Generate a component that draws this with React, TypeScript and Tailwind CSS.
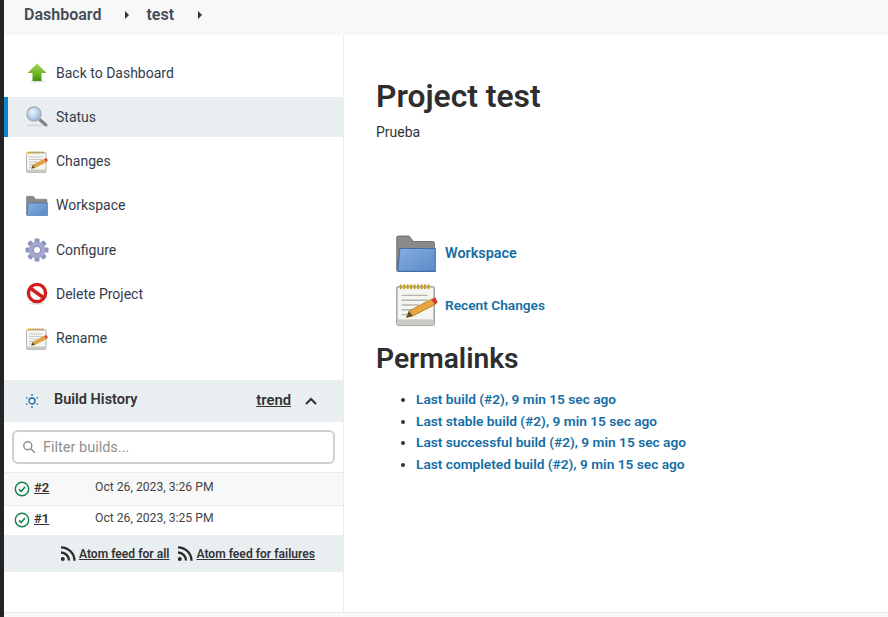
import { useId } from 'react';
import type { ReactNode } from 'react';

const FONT = "font-['Roboto','Noto_Sans',sans-serif]";

function ArrowUpIcon() {
  const id = useId();
  return (
    <svg width="24" height="24" viewBox="0 0 24 24">
      <defs>
        <linearGradient id={id} x1="0" y1="0" x2="0" y2="1">
          <stop offset="0" stopColor="#a4d65a" />
          <stop offset="0.6" stopColor="#6cb324" />
          <stop offset="1" stopColor="#3f8f0d" />
        </linearGradient>
      </defs>
      <ellipse cx="12" cy="20.500" rx="8" ry="1.200" fill="#e2e2e2" />
      <path d="M12 2.500 21.500 12h-5v8H7.500v-8h-5z" fill={`url(#${id})`} />
    </svg>
  );
}

function SearchIcon() {
  const id = useId();
  return (
    <svg width="24" height="24" viewBox="0 0 24 24">
      <defs>
        <radialGradient id={id} cx="0.4" cy="0.35" r="0.7">
          <stop offset="0" stopColor="#eef4fb" />
          <stop offset="1" stopColor="#8fb3dd" />
        </radialGradient>
      </defs>
      <ellipse cx="10" cy="20.500" rx="9" ry="1.300" fill="#d9dcdf" />
      <path d="M14.500 14.500 21 20" stroke="#7f8386" strokeWidth="3" strokeLinecap="round" />
      <circle cx="9" cy="9" r="7" fill={`url(#${id})`} stroke="#a9b2ba" strokeWidth="1.600" />
    </svg>
  );
}

function NotepadIcon({ size = 24 }: { size?: number }) {
  const rings = [3.500, 5.300, 7.100, 8.900, 10.700, 12.500, 14.300, 16.100, 17.900];
  return (
    <svg width={size} height={size} viewBox="0 0 24 24">
      <rect x="1.500" y="2.500" width="19.500" height="20" rx="1" fill="#f5f5f1" stroke="#a5a5a0" strokeWidth="0.800" />
      <rect x="1.500" y="19.500" width="19.500" height="3" fill="#c9c9c5" />
      {rings.map((x) => (
        <rect key={x} x={x - 0.5} y="1.200" width="1.100" height="2.600" rx="0.500" fill="#c4a227" />
      ))}
      <path d="M4 7h13.500M4 9.500h13.500M4 12h9M4 14.500h6M4 17h4" stroke="#b5b5b0" strokeWidth="0.700" />
      <path d="m6.500 18.500 1.300-3.300L19.500 9l2 2.700-11.700 6z" fill="#e9a63c" stroke="#a96f1e" strokeWidth="0.400" />
      <path d="m6.500 18.500 1.300-3.300 2 2.500z" fill="#5d4a32" />
      <path d="m19.500 9 2-1 1.300 2.500-1.300 1.200z" fill="#d9342b" />
    </svg>
  );
}

function FolderIcon({ size = 24 }: { size?: number }) {
  const id = useId();
  return (
    <svg width={size} height={size} viewBox="0 0 24 24">
      <defs>
        <linearGradient id={id} x1="0" y1="0" x2="1" y2="1">
          <stop offset="0" stopColor="#86ade0" />
          <stop offset="1" stopColor="#5a8bc8" />
        </linearGradient>
      </defs>
      <path d="M1.500 21V3q0-.8.800-.8h6l2.200 3h10.700q.8 0 .8.800V9H4z" fill="#8a8a8a" stroke="#6a6a6a" strokeWidth="0.500" />
      <path d="M2 21.500 3.200 9h19.300v12.500z" fill={`url(#${id})`} stroke="#3f6ea8" strokeWidth="0.600" />
    </svg>
  );
}

function GearIcon() {
  const teeth = [0, 45, 90, 135, 180, 225, 270, 315];
  return (
    <svg width="24" height="24" viewBox="0 0 24 24">
      {teeth.map((a) => (
        <rect key={a} x="9.500" y="0.500" width="5" height="6" rx="1" fill="#8f94bd" transform={`rotate(${a} 12 12)`} />
      ))}
      <circle cx="12" cy="12" r="8.300" fill="#a3a7cb" />
      <circle cx="12" cy="12" r="3.700" fill="#fff" stroke="#6c719c" strokeWidth="0.800" />
    </svg>
  );
}

function NoEntryIcon() {
  return (
    <svg width="24" height="24" viewBox="0 0 24 24">
      <ellipse cx="12" cy="21.500" rx="8" ry="1.200" fill="#ddd" />
      <circle cx="12" cy="11" r="8.600" fill="#fff" stroke="#d11f1f" strokeWidth="3.400" />
      <path d="m5.800 6.500 12.400 9" stroke="#d11f1f" strokeWidth="3.400" />
    </svg>
  );
}

function NavItem({ icon, label, active }: { icon: ReactNode; label: string; active?: boolean }) {
  return (
    <div className={`flex h-[40px] items-center ${active ? 'border-l-[4px] border-[#0b85d0] bg-[#e9eef1] pl-[17px]' : 'pl-[21px]'} mb-[4.300px] text-[14px] text-[#333b4a]`}>
      <span className="mr-[8px] flex w-[24px] justify-center">{icon}</span>
      <span className="ml-[-1px]">{label}</span>
    </div>
  );
}

function BuildRow({ num, date, shaded }: { num: string; date: string; shaded?: boolean }) {
  return (
    <div className={`flex items-center border-t border-[#e9ebec] pl-[10px] ${shaded ? 'h-[33px] bg-[#f8f8f8] pb-[1px]' : 'h-[30px] bg-white pb-[2px]'}`}>
      <svg width="16" height="16" viewBox="0 0 16 16" className="mt-[1px]" fill="none">
        <circle cx="8" cy="8" r="6.700" stroke="#138347" strokeWidth="1.400" />
        <path d="m5 8.300 2.200 2.100L11 6" stroke="#138347" strokeWidth="1.600" />
      </svg>
      <a className="ml-[4px] mt-[-2px] w-[61px] text-[13px] font-semibold text-[#333] underline">{num}</a>
      <span className="mt-[-2px] text-[12.200px] text-[#444]">{date}</span>
    </div>
  );
}

function RssIcon() {
  return (
    <svg width="16" height="17" viewBox="0 0 16 17" fill="none" stroke="#2b2b2b" strokeWidth="2.300">
      <circle cx="2.800" cy="14" r="2" fill="#2b2b2b" stroke="none" />
      <path d="M1 7.500a8 8 0 0 1 8 8" />
      <path d="M1 2.300a13.500 13.500 0 0 1 13.500 13.500" />
    </svg>
  );
}

function Crumb({ children }: { children: ReactNode }) {
  return <span className="text-[16px] font-semibold text-[#454a55]">{children}</span>;
}

function Caret() {
  return <span className="block h-0 w-0 border-y-[4px] border-l-[4px] border-y-transparent border-l-[#333]" />;
}

export default function App() {
  const links = ['Last build (#2), 9 min 15 sec ago', 'Last stable build (#2), 9 min 15 sec ago', 'Last successful build (#2), 9 min 15 sec ago', 'Last completed build (#2), 9 min 15 sec ago'];

  return (
    <div className={`flex h-[617px] w-[888px] overflow-hidden bg-white ${FONT}`}>
      <div className="w-[4px] shrink-0 bg-[#242424]" />
      <div className="flex min-w-0 flex-1 flex-col">
        {/* breadcrumb */}
        <div className="flex h-[35px] shrink-0 items-center bg-[#f8f8f8] pb-[5px] pl-[20px]">
          <Crumb>Dashboard</Crumb>
          <span className="ml-[24px] mr-[17px]"><Caret /></span>
          <Crumb>test</Crumb>
          <span className="ml-[24px]"><Caret /></span>
        </div>

        <div className="flex min-h-0 flex-1">
          {/* sidebar */}
          <div className="w-[340px] shrink-0 border-r border-[#e9ebec] pt-[18px]">
            <NavItem icon={<ArrowUpIcon />} label="Back to Dashboard" />
            <NavItem icon={<SearchIcon />} label="Status" active />
            <NavItem icon={<NotepadIcon />} label="Changes" />
            <NavItem icon={<FolderIcon />} label="Workspace" />
            <NavItem icon={<GearIcon />} label="Configure" />
            <NavItem icon={<NoEntryIcon />} label="Delete Project" />
            <NavItem icon={<NotepadIcon />} label="Rename" />

            <div className="mt-[21px] flex h-[42px] items-center bg-[#e9eef1] pl-[21px] pr-[26px]">
              <svg width="14" height="16" viewBox="0 0 14 16" fill="none" stroke="#1a6fa8" strokeWidth="1.300">
                <circle cx="7" cy="8" r="3" />
                <path d="M7 1v2M7 13v2M1 4.500l1.500.8M11.500 10.700l1.500.8M1 11.500l1.500-.8M11.500 5.300l1.500-.8" />
              </svg>
              <span className="ml-[15px] mt-[-2px] text-[14.500px] font-semibold text-[#333]">Build History</span>
              <a className="ml-auto mt-[-2px] text-[14.800px] font-semibold text-[#333] underline">trend</a>
              <svg width="12" height="8" viewBox="0 0 12 8" fill="none" stroke="#333" strokeWidth="2" className="ml-[14px]">
                <path d="m1 7 5-5 5 5" />
              </svg>
            </div>

            <div className="flex h-[50px] items-center px-[8px]">
              <div className="flex h-[34px] w-full items-center rounded-[6px] border-2 border-[#cdcfd1] pl-[8px]">
                <svg width="14" height="14" viewBox="0 0 14 14" fill="none" stroke="#8a8a8a" strokeWidth="1.400">
                  <circle cx="5.800" cy="5.800" r="4" />
                  <path d="m8.800 8.800 4 4" />
                </svg>
                <span className="ml-[7px] mt-[2px] text-[14.500px] text-[#8f8f8f]">Filter builds...</span>
              </div>
            </div>

            <BuildRow num="#2" date="Oct 26, 2023, 3:26 PM" shaded />
            <BuildRow num="#1" date="Oct 26, 2023, 3:25 PM" />

            <div className="flex h-[37px] items-center justify-end bg-[#e9eef1] pr-[28px] pt-[1px] text-[12.100px] font-semibold text-[#333]">
              <RssIcon />
              <a className="ml-[3px] underline">Atom feed for all</a>
              <span className="ml-[8px]"><RssIcon /></span>
              <a className="ml-[3px] underline">Atom feed for failures</a>
            </div>
          </div>

          {/* main */}
          <div className="min-w-0 flex-1 pl-[32px]">
            <h1 className="mt-[39px] text-[31.800px] leading-[44px] font-semibold text-[#2e2e2e]">Project test</h1>
            <p className="mt-[4px] text-[14px] leading-[20px] text-[#333]">Prueba</p>

            <div className="mt-[91px] ml-[18px] flex h-[42px] items-center">
              <FolderIcon size={44} />
              <a className="ml-[7px] text-[14.400px] font-semibold text-[#146da3]">Workspace</a>
            </div>
            <div className="mt-[6px] ml-[18px] flex h-[48px] items-center">
              <NotepadIcon size={46} />
              <a className="ml-[5px] text-[13.700px] font-semibold text-[#146da3]">Recent Changes</a>
            </div>

            <h2 className="mt-[11px] text-[28.200px] leading-[38px] font-semibold text-[#2e2e2e]">Permalinks</h2>
            <ul className="mt-[11px] ml-[40px] list-disc text-[13.700px] leading-[21.700px] font-semibold text-[#146da3] marker:text-[#333]">
              {links.map((l) => (
                <li key={l}><a>{l}</a></li>
              ))}
            </ul>
          </div>
        </div>

        <div className="h-[5px] shrink-0 border-t border-[#e9ebec] bg-[#f8f8f8]" />
      </div>
    </div>
  );
}
